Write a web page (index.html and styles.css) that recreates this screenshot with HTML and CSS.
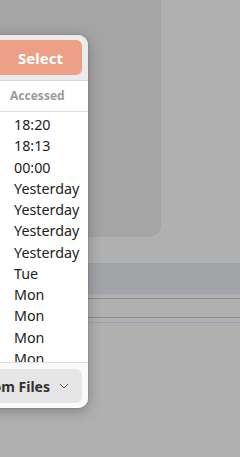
FILE: index.html
```html
<!DOCTYPE html>
<html>
<head>
<meta charset="utf-8">
<link rel="stylesheet" href="styles.css">
</head>
<body>
<div class="scene">
  <div class="top-pane"></div>
  <div class="band"></div>
  <div class="lines"></div>
  <div class="blue-line"></div>
  <div class="popup">
    <div class="popup-head">
      <button class="select-btn">Select</button>
    </div>
    <div class="col-head">Accessed</div>
    <div class="list">
      <div class="row">18:20</div>
      <div class="row">18:13</div>
      <div class="row">00:00</div>
      <div class="row">Yesterday</div>
      <div class="row">Yesterday</div>
      <div class="row">Yesterday</div>
      <div class="row">Yesterday</div>
      <div class="row">Tue</div>
      <div class="row">Mon</div>
      <div class="row">Mon</div>
      <div class="row">Mon</div>
      <div class="row">Mon</div>
      <div class="row">Mon</div>
    </div>
    <div class="popup-foot">
      <div class="filter-btn">
        <span class="filter-label">Custom Files</span>
        <svg class="chev" width="10" height="6" viewBox="0 0 10 6"><path d="M1 1 L5 5 L9 1" fill="none" stroke="#555" stroke-width="1"/></svg>
      </div>
    </div>
  </div>
</div>
</body>
</html>
```
FILE: styles.css
```css
html, body {
  margin: 0;
  padding: 0;
}
body {
  width: 240px;
  height: 457px;
  overflow: hidden;
  font-family: "Noto Sans", "DejaVu Sans", sans-serif;
}
.scene {
  position: relative;
  width: 240px;
  height: 457px;
  background: #b0b0b0;
  overflow: hidden;
}
.top-pane {
  width: 161px;
  height: 237px;
  background: #a5a5a5;
  border-bottom-right-radius: 12px;
}
.band {
  margin-top: 26px;
  height: 29px;
  background: #a3a4a8;
  border-top: 1px solid #99a2b4;
  border-bottom: 1px solid #99a2b4;
}
.lines {
  margin-top: 4px;
  height: 18px;
  border-top: 1px solid #8c8c8c;
  border-bottom: 1px solid #8c8c8c;
}
.blue-line {
  margin-top: 4px;
  height: 1px;
  background: #99a2b4;
}
.popup {
  position: absolute;
  left: -40px;
  top: 35px;
  width: 128px;
  height: 373px;
  background: #ffffff;
  border-radius: 10px;
  box-shadow: 0 3px 14px rgba(0, 0, 0, 0.28), 0 0 0 1px rgba(0, 0, 0, 0.06);
  display: flex;
  flex-direction: column;
  overflow: hidden;
}
.popup-head {
  height: 46px;
  background: #ebebeb;
  border-bottom: 1px solid #d6d6d6;
  box-sizing: border-box;
  padding: 5px 6px 0 0;
  display: flex;
}
.select-btn {
  width: 122px;
  height: 35px;
  margin-left: auto;
  border: none;
  border-radius: 6px;
  background: #eda087;
  color: #ffffff;
  font-family: "Noto Sans", "DejaVu Sans", sans-serif;
  font-weight: 700;
  font-size: 15px;
  padding: 0 0 0 58px;
  text-align: left;
}
.col-head {
  height: 30px;
  line-height: 30px;
  padding-left: 50px;
  font-size: 12px;
  font-weight: 700;
  color: #9b9b9b;
  border-bottom: 1px solid #dedede;
}
.list {
  flex: 1;
  overflow: hidden;
  padding-top: 2px;
}
.row {
  height: 21.27px;
  line-height: 21px;
  padding-left: 54px;
  font-size: 14.3px;
  color: #222222;
  white-space: nowrap;
}
.popup-foot {
  height: 46px;
  border-top: 1px solid #e0e0e0;
  background: #fafafa;
  box-sizing: border-box;
  padding: 6px 6px 0 0;
  display: flex;
}
.filter-btn {
  margin-left: auto;
  width: 122px;
  height: 34px;
  border-radius: 6px;
  background: #e6e6e6;
  display: flex;
  align-items: center;
  justify-content: flex-end;
  padding-right: 13px;
  box-sizing: border-box;
  gap: 9px;
  overflow: hidden;
}
.filter-label {
  font-size: 14px;
  font-weight: 700;
  color: #333333;
  white-space: nowrap;
}
.chev {
  display: block;
  flex: none;
}
```
